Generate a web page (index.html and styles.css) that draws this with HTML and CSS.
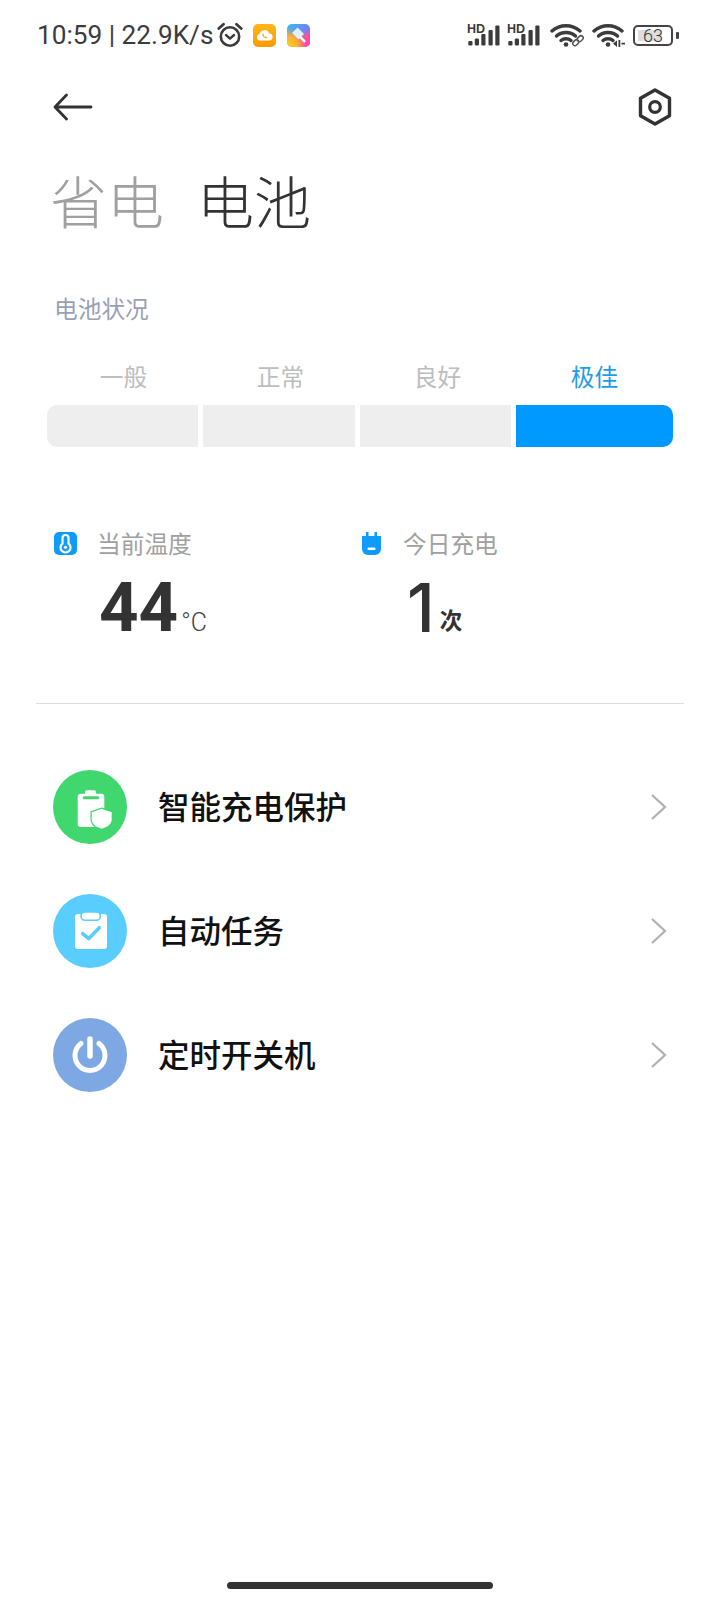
FILE: index.html
```html
<!DOCTYPE html>
<html lang="zh">
<head>
<meta charset="utf-8">
<title>电池</title>
<link rel="stylesheet" href="styles.css">
</head>
<body>
<div class="page">
  <header class="status">
    <div class="status-left">
      <span class="clock">10:59 | 22.9K/s</span>
      <svg class="ic-alarm" viewBox="0 0 26 26"><circle cx="13" cy="14.5" r="9.2" fill="none" stroke="#3c3c3c" stroke-width="2.600"/><path d="M9 13l4 3.600 4-3.600" fill="none" stroke="#3c3c3c" stroke-width="2.400" stroke-linecap="round" stroke-linejoin="round"/><path d="M1.800 6.500L6.500 2.200M24.200 6.500L19.500 2.200" stroke="#3c3c3c" stroke-width="2.800" stroke-linecap="round"/></svg>
      <svg class="ic-app ic-cloud" viewBox="0 0 23 23"><defs><linearGradient id="gc" x1="0" y1="0" x2="0" y2="1"><stop offset="0" stop-color="#ffb618"/><stop offset="1" stop-color="#fb9a06"/></linearGradient></defs><rect width="23" height="23" rx="5" fill="url(#gc)"/><path d="M7 16.500a3.300 3.300 0 0 1-.4-6.500 5 5 0 0 1 9.600-.5 3.500 3.500 0 0 1-.2 7z" fill="#fff"/><path d="M10 9.500l1.200 1.200-.6.8c.4.7.8 1.100 1.500 1.400l.8-.6 1.100 1.100-.8.8c-2 .2-4-2-3.900-3.900z" fill="#f9a60f"/></svg>
      <svg class="ic-app ic-theme" viewBox="0 0 23 23"><defs><linearGradient id="gt" x1="0" y1="0" x2="1" y2=".5"><stop offset="0" stop-color="#2fc0f5"/><stop offset="1" stop-color="#8a6ff0"/></linearGradient><radialGradient id="gy" cx="0" cy="1" r=".85"><stop offset="0" stop-color="#ffd21f"/><stop offset=".55" stop-color="#ffb030"/><stop offset="1" stop-color="#ff9a40" stop-opacity="0"/></radialGradient><radialGradient id="gp" cx="1" cy="1" r=".75"><stop offset="0" stop-color="#fb3fc0"/><stop offset=".6" stop-color="#fb4f9a"/><stop offset="1" stop-color="#fb5f90" stop-opacity="0"/></radialGradient></defs><rect width="23" height="23" rx="5" fill="url(#gt)"/><rect width="23" height="23" rx="5" fill="url(#gp)"/><rect width="23" height="23" rx="5" fill="url(#gy)"/><path d="M10.500 3.500l6.500 6.500-5.500 5.500-6.500-6.500z" fill="#e6eefb"/><path d="M14 12l5 5-1.800 1.800-5-5z" fill="#fff"/></svg>
    </div>
    <div class="status-right">
      <svg class="ic-signal" viewBox="0 0 34 24"><text class="hd" x="0" y="9.500">HD</text><rect x="1.300" y="18" width="4.200" height="4.500" rx="1"/><rect x="7.800" y="15.500" width="4.200" height="7" rx="1"/><rect x="14.300" y="11" width="4.200" height="11.500" rx="1"/><rect x="21.500" y="7" width="4.200" height="15.500" rx="1"/><rect x="28.300" y="2.500" width="4.200" height="20" rx="1"/></svg>
      <svg class="ic-signal" viewBox="0 0 34 24"><text class="hd" x="0" y="9.500">HD</text><rect x="1.300" y="18" width="4.200" height="4.500" rx="1"/><rect x="7.800" y="15.500" width="4.200" height="7" rx="1"/><rect x="14.300" y="11" width="4.200" height="11.500" rx="1"/><rect x="21.500" y="7" width="4.200" height="15.500" rx="1"/><rect x="28.300" y="2.500" width="4.200" height="20" rx="1"/></svg>
      <svg class="ic-wifi" viewBox="0 0 34 24"><g fill="none" stroke="#3c3c3c" stroke-width="3.400" stroke-linecap="round"><path d="M2 8c8-7 20-7 28 0"/><path d="M6.500 13c5-4.600 14-4.600 19 0"/><path d="M11 17.500c2.700-2.300 7.300-2.300 10 0"/></g><circle cx="16" cy="21.500" r="2.300" fill="#3c3c3c"/><g fill="none" stroke="#555" stroke-width="1.500"><rect x="22.500" y="17.500" width="6.500" height="4.400" rx="2.200" transform="rotate(-45 25.700 19.700)"/><rect x="27" y="13.500" width="6.500" height="4.400" rx="2.200" transform="rotate(-45 30.200 15.700)"/></g></svg>
      <svg class="ic-wifi ic-wifi-2" viewBox="0 0 34 24"><g fill="none" stroke="#3c3c3c" stroke-width="3.400" stroke-linecap="round"><path d="M2 8c8-7 20-7 28 0"/><path d="M6.500 13c5-4.600 14-4.600 19 0"/><path d="M11 17.500c2.700-2.300 7.300-2.300 10 0"/></g><circle cx="16" cy="21.500" r="2.300" fill="#3c3c3c"/><path d="M21 20.500l4-3v6.500zM26.500 17h1.800v7h-1.800zM29.500 19.800h3.500v1.800h-3.500z" fill="#3c3c3c"/></svg>
      <div class="battery"><div class="battery-body"><span class="battery-fill"></span><span class="battery-num">63</span></div><span class="battery-cap"></span></div>
    </div>
  </header>

  <nav class="nav">
    <svg class="ic-back" viewBox="0 0 40 28"><path d="M38 14H2M13.500 2L2 14l11.500 12" fill="none" stroke="#333" stroke-width="2.800" stroke-linecap="round" stroke-linejoin="round"/></svg>
    <svg class="ic-gear" viewBox="0 0 34 38"><path d="M17 2l14.500 8.300v17.400L17 36 2.500 27.700V10.300z" fill="none" stroke="#333" stroke-width="3.400" stroke-linejoin="round"/><circle cx="17" cy="19" r="5.300" fill="none" stroke="#333" stroke-width="3.200"/></svg>
  </nav>

  <div class="tabs">
    <span class="tab">省电</span>
    <span class="tab tab-on">电池</span>
  </div>

  <h2 class="section">电池状况</h2>

  <div class="level-names">
    <span class="level-name">一般</span>
    <span class="level-name">正常</span>
    <span class="level-name">良好</span>
    <span class="level-name level-on">极佳</span>
  </div>
  <div class="bars">
    <div class="bar bar-first"></div>
    <div class="bar"></div>
    <div class="bar"></div>
    <div class="bar bar-last"></div>
  </div>

  <div class="stats">
    <div class="stat">
      <div class="stat-head">
        <svg class="ic-stat" viewBox="0 0 23 23"><rect width="23" height="23" rx="5" fill="#0f9bfb"/><path d="M8.500 6a3 3 0 0 1 6 0v5.500a5 5 0 1 1-6 0z" fill="none" stroke="#fff" stroke-width="2.200"/><circle cx="11.500" cy="15.300" r="1.600" fill="#fff"/></svg>
        <span class="stat-label">当前温度</span>
      </div>
      <div class="stat-value"><span class="num">44</span><span class="unit-c">°C</span></div>
    </div>
    <div class="stat">
      <div class="stat-head">
        <svg class="ic-stat" viewBox="0 0 23 23"><path d="M6 0h2.500v5H6zM14.500 0H17v5h-2.500z" fill="#0f9bfb"/><path d="M2 4h19v13a6 6 0 0 1-6 6H8a6 6 0 0 1-6-6z" fill="#0f9bfb"/><rect x="7.500" y="15.500" width="8" height="2.500" rx="1" fill="#fff"/></svg>
        <span class="stat-label">今日充电</span>
      </div>
      <div class="stat-value"><span class="num num-light">1</span><span class="unit-n">次</span></div>
    </div>
  </div>

  <hr class="divider">

  <ul class="menu">
    <li class="row">
      <span class="circle c-green"><svg viewBox="0 0 44 44"><path d="M17 8.700V7a1.700 1.700 0 0 1 1.700-1.700h7.600A1.700 1.700 0 0 1 28 7v1.700h5.300a3 3 0 0 1 3 3V39a3 3 0 0 1-3 3H12.700a3 3 0 0 1-3-3V11.700a3 3 0 0 1 3-3z" fill="#fff"/><rect x="14.700" y="11.300" width="16.600" height="3" rx="1.500" fill="#3fd76e"/><path d="M33.700 23.700l10 3.500v7c0 5-4.500 8-10 9.500-5.500-1.500-10-4.500-10-9.500v-7z" fill="#fff" stroke="#3fd76e" stroke-width="2.500" paint-order="stroke"/></svg></span>
      <span class="row-text">智能充电保护</span>
      <svg class="chev" viewBox="0 0 18 28"><path d="M2 2l13 12L2 26" fill="none" stroke="#b0b0b0" stroke-width="2.200"/></svg>
    </li>
    <li class="row">
      <span class="circle c-sky"><svg viewBox="0 0 44 44"><rect x="7" y="5" width="32" height="35" rx="3" fill="#fff"/><rect x="13" y="3" width="19.300" height="8.300" rx="4" fill="#fff" stroke="#59cdfd" stroke-width="1.600"/><path d="M14.700 24.700l6 5 10.600-11" fill="none" stroke="#59cdfd" stroke-width="3.500" stroke-linecap="round" stroke-linejoin="round"/></svg></span>
      <span class="row-text">自动任务</span>
      <svg class="chev" viewBox="0 0 18 28"><path d="M2 2l13 12L2 26" fill="none" stroke="#b0b0b0" stroke-width="2.200"/></svg>
    </li>
    <li class="row">
      <span class="circle c-blue"><svg viewBox="0 0 44 44"><path d="M13 10.500a15 15 0 1 0 18 0" fill="none" stroke="#fff" stroke-width="5" stroke-linecap="round"/><path d="M22 6v17" stroke="#fff" stroke-width="5.500" stroke-linecap="round"/></svg></span>
      <span class="row-text">定时开关机</span>
      <svg class="chev" viewBox="0 0 18 28"><path d="M2 2l13 12L2 26" fill="none" stroke="#b0b0b0" stroke-width="2.200"/></svg>
    </li>
  </ul>

  <div class="home-bar"></div>
</div>
</body>
</html>
```

FILE: styles.css
```css
* { box-sizing: border-box; }
html, body { margin: 0; padding: 0; background: #fff; }
body { font-family: "Noto Sans CJK SC", "Noto Sans", sans-serif; }
.page { width: 720px; height: 1600px; display: flex; flex-direction: column; overflow: hidden; }

.status { height: 70px; padding: 0 41px 0 37px; display: flex; justify-content: space-between; align-items: center; flex: none; }
.status-left, .status-right { display: flex; align-items: center; }
.clock { font-family: "Roboto", sans-serif; font-size: 26.200px; color: #3c3c3c; line-height: 30px; white-space: nowrap; }
.ic-alarm { width: 26px; height: 26px; margin-left: 4px; }
.ic-app { width: 23px; height: 23px; }
.ic-cloud { margin-left: 10px; }
.ic-theme { margin-left: 11px; }
.ic-signal { width: 34px; height: 24px; fill: #3c3c3c; }
.ic-signal + .ic-signal { margin-left: 6px; }
.hd { font-family: "Liberation Sans", sans-serif; font-size: 12.500px; font-weight: 700; fill: #3c3c3c; }
.ic-wifi { width: 34px; height: 24px; margin-left: 9px; }
.ic-wifi-2 { margin-left: 8px; }
.battery { display: flex; align-items: center; margin-left: 7px; }
.battery-body { width: 40px; height: 21px; border: 2px solid #444; border-radius: 5px; position: relative; padding: 3px; }
.battery-fill { display: block; width: 24px; height: 100%; background: #dedede; border-radius: 1px; }
.battery-num { position: absolute; left: 0; right: 0; top: -2px; text-align: center; font-family: "Roboto", sans-serif; font-weight: 300; font-size: 18px; line-height: 21px; color: #333; }
.battery-cap { width: 3px; height: 7px; margin-left: 3px; background: #444; border-radius: 1px; }

.nav { height: 74px; padding: 0 48px 0 53px; display: flex; justify-content: space-between; align-items: center; flex: none; }
.ic-back { width: 40px; height: 28px; }
.ic-gear { width: 34px; height: 38px; }

.tabs { margin-top: 15px; padding-left: 50px; display: flex; gap: 33px; flex: none; }
.tab { font-size: 57px; line-height: 80px; font-weight: 300; color: #a0a0a0; }
.tab-on { color: #333; }

.section { margin: 52px 0 0 54px; font-size: 23.700px; line-height: 34px; font-weight: 400; color: #9a9fb8; }

.level-names { margin: 34px 0 0 45px; display: grid; grid-template-columns: repeat(4, 157px); flex: none; }
.level-name { font-size: 23.700px; line-height: 34px; color: #bdbdbd; text-align: center; }
.level-on { color: #1d9de8; }
.bars { margin: 12px 47px 0; display: grid; grid-template-columns: 1fr 1fr 1fr 157px; gap: 5px; flex: none; }
.bar { height: 42px; background: #eeeeee; }
.bar-first { border-radius: 10px 0 0 10px; }
.bar-last { background: #0099ff; border-radius: 0 10px 10px 0; }

.stats { margin: 79px 0 0 54px; display: flex; flex: none; }
.stat { width: 306px; }
.stat-head { display: flex; align-items: center; gap: 20px; height: 34px; }
.ic-stat { width: 23px; height: 23px; flex: none; }
.stat-label { font-size: 23.700px; line-height: 34px; color: #a0a0a0; }
.stat-value { margin: 12px 0 0 45px; height: 72px; font-family: "Roboto", sans-serif; font-size: 69px; line-height: 72px; white-space: nowrap; }
.num { font-weight: 700; font-size: 69px; line-height: 72px; color: #333; }
.num-light { font-family: "Inter", sans-serif; font-weight: 500; font-size: 67px; margin-left: 2px; }
.unit-c { font-family: "Roboto", sans-serif; font-size: 25px; line-height: 1; font-weight: 300; color: #444; margin-left: 3px; }
.unit-n { font-family: "Noto Sans CJK SC", sans-serif; font-size: 22.500px; line-height: 1; font-weight: 700; color: #333; margin-left: 5px; vertical-align: 3px; }

.divider { margin: 59px 36px 0; height: 1px; border: 0; background: #dcdcdc; flex: none; }

.menu { list-style: none; margin: 41px 0 0; padding: 0 52px 0 53px; display: flex; flex-direction: column; }
.row { height: 124px; display: flex; align-items: center; }
.circle { width: 74px; height: 74px; border-radius: 50%; display: flex; align-items: center; justify-content: center; flex: none; }
.circle svg { width: 44px; height: 44px; flex: none; }
.c-green { background: #3fd76e; }
.c-sky { background: #59cdfd; }
.c-blue { background: #7ea8e3; }
.row-text { margin: 0 0 5px 31px; font-size: 31.500px; line-height: 40px; font-weight: 500; color: #111; flex: 1; }
.chev { width: 18px; height: 28px; flex: none; }

.home-bar { width: 266px; height: 7px; border-radius: 4px; background: #333; margin: auto auto 11px; flex: none; }
```
